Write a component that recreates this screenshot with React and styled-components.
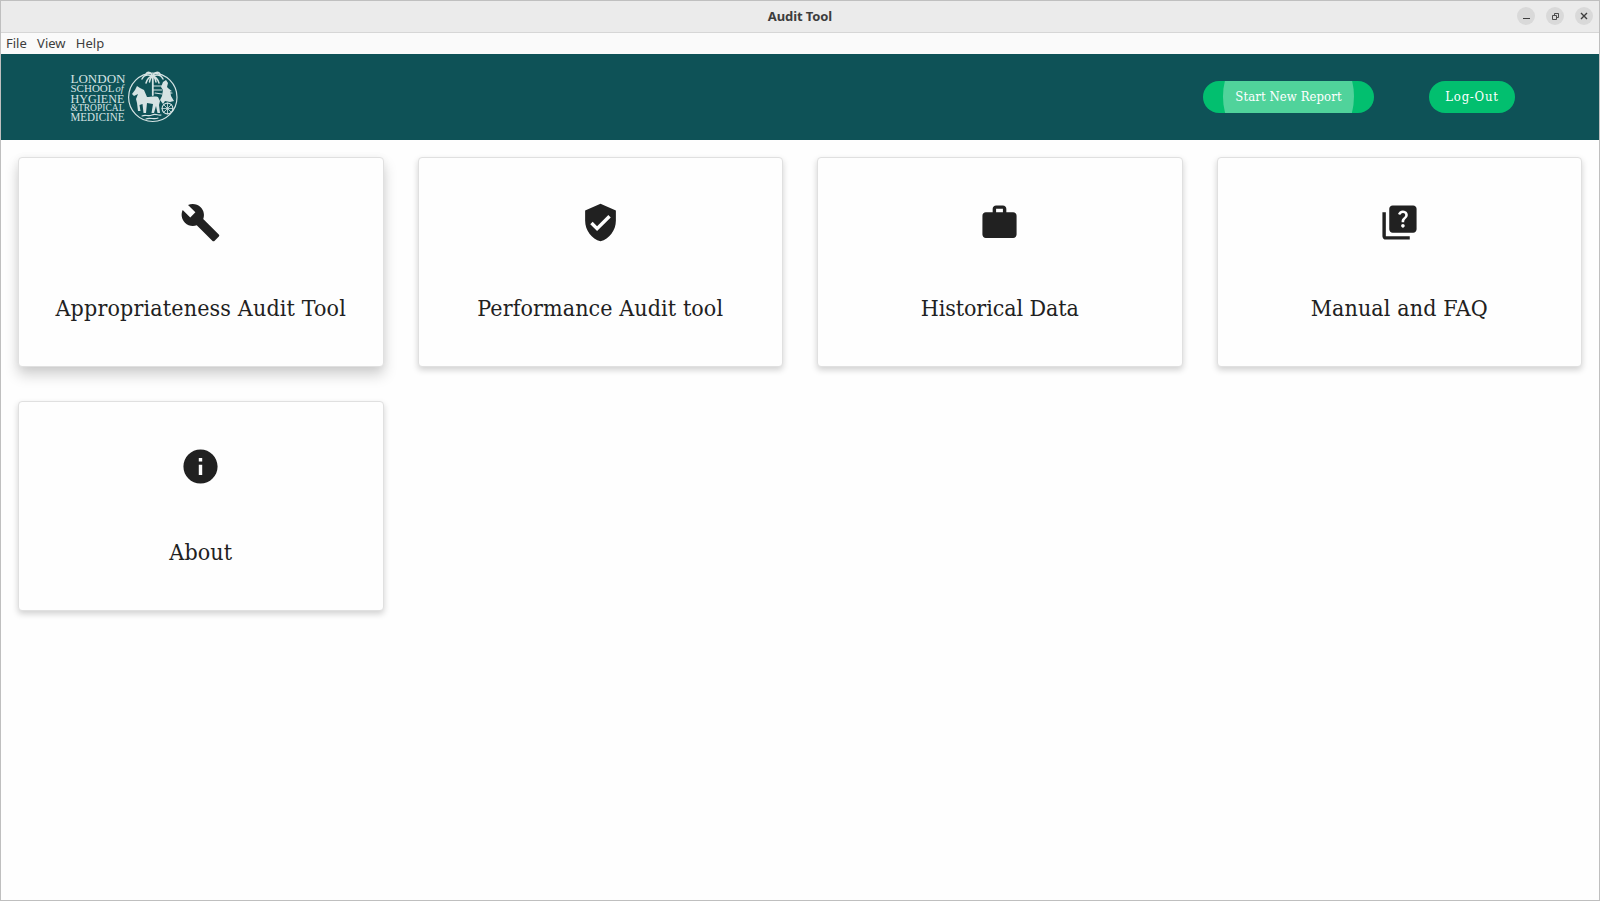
import React from "react";
import styled, { createGlobalStyle } from "styled-components";
import { MdBuild, MdVerifiedUser, MdWork, MdQuiz, MdInfo } from "react-icons/md";

const GlobalStyle = createGlobalStyle`
  * { box-sizing: border-box; }
  body { margin: 0; background: #fefefe; overflow: hidden; }
`;

const serif = `"DejaVu Serif Condensed", "DejaVu Serif", serif`;

const Window = styled.div`
  display: flex;
  flex-direction: column;
  width: 1600px;
  height: 901px;
  border: 1px solid #bfbfbf;
  background: #fefefe;
`;

const TitleBar = styled.div`
  display: grid;
  grid-template-columns: 1fr auto 1fr;
  align-items: center;
  height: 32px;
  padding: 0 6.5px 1px;
  background: #ebebeb;
  border-bottom: 1px solid #d6d6d6;
  font: 700 13px/30px "Noto Sans", sans-serif;
  color: #3d3d3d;
`;

const Title = styled.span`
  grid-column: 2;
  letter-spacing: -0.1px;
  white-space: nowrap;
`;

const WindowControls = styled.div`
  display: flex;
  justify-content: flex-end;
  gap: 11px;
`;

const ControlButton = styled.span`
  display: flex;
  width: 18px;
  height: 18px;
  border-radius: 50%;
  background: #d9d9d9;
`;

const MenuBar = styled.div`
  display: flex;
  gap: 10.3px;
  height: 21px;
  padding-left: 5px;
  background: #fafafa;
  font: 400 13px/20px "Noto Sans", sans-serif;
  color: #3d3d3d;
`;

const MenuItem = styled.span`
  letter-spacing: 0;
`;

const Header = styled.header`
  display: flex;
  align-items: center;
  height: 86px;
  padding: 0 84px 0 68px;
  background: #0e5257;
`;

const Logo = styled.svg`
  display: block;
  margin-right: auto;
`;

const PillButton = styled.button`
  position: relative;
  overflow: hidden;
  width: ${(p) => p.$width}px;
  height: 32px;
  margin-left: ${(p) => p.$gap || 0}px;
  padding: 0;
  border: 0;
  border-radius: 16px;
  background: #02bf6f;
  color: #fff;
  font: 400 13px/32px ${serif};
  letter-spacing: ${(p) => p.$spacing}px;
  white-space: nowrap;
`;

const Ripple = styled.span`
  position: absolute;
  top: -50px;
  left: 20px;
  width: 131px;
  height: 131px;
  border-radius: 50%;
  background: rgba(255, 255, 255, 0.31);
`;

const Label = styled.span`
  position: relative;
`;

const CardGrid = styled.main`
  display: grid;
  grid-template-columns: repeat(4, 1fr);
  grid-auto-rows: 210px;
  gap: 34px;
  padding: 17px;
`;

const Card = styled.section`
  display: flex;
  flex-direction: column;
  align-items: center;
  padding-top: 44px;
  border: 1px solid #e0e0e0;
  border-radius: 4px;
  background: #fefefe;
  box-shadow: ${(p) =>
    p.$raised
      ? "0 8px 14px rgba(0,0,0,.18), 0 1px 8px rgba(0,0,0,.05)"
      : "0 3px 6px rgba(0,0,0,.18)"};
  color: #212121;

  svg { width: 41px; height: 41px; }
`;

const CardTitle = styled.h2`
  margin: 48px 0 0;
  font: 400 23px/34px ${serif};
  letter-spacing: ${(p) => p.$spacing}px;
  white-space: nowrap;
`;

const cards = [
  { title: "Appropriateness Audit Tool", Icon: MdBuild, spacing: 0.16, raised: true },
  { title: "Performance Audit tool", Icon: MdVerifiedUser, spacing: 0.1 },
  { title: "Historical Data", Icon: MdWork, spacing: -0.07 },
  { title: "Manual and FAQ", Icon: MdQuiz, spacing: 0.12 },
  { title: "About", Icon: MdInfo, spacing: 0.1 },
];

const logoLines = [
  ["LONDON", 15.2, 12, 55],
  ["HYGIENE", 34.6, 12, 54],
  ["&TROPICAL", 43.3, 9.5, 54],
  ["MEDICINE", 53, 11.5, 54],
];

function SchoolLogo() {
  return (
    <Logo width="112" height="58" viewBox="0 0 112 58" fill="#d5e3e3">
      <g fontFamily="Liberation Serif, serif">
        {logoLines.map(([text, y, size, width]) => (
          <text key={text} x="1.5" y={y} fontSize={size} textLength={width} lengthAdjust="spacingAndGlyphs">{text}</text>
        ))}
        <text x="1.5" y="24.4" fontSize="10" textLength="44" lengthAdjust="spacingAndGlyphs">SCHOOL</text>
        <text x="46.5" y="24.4" fontSize="10" fontStyle="italic" textLength="8" lengthAdjust="spacingAndGlyphs">of</text>
      </g>
      <circle cx="83.8" cy="29.3" r="24.2" fill="none" stroke="#d5e3e3" strokeWidth="1.2" />
      <g fill="none" stroke="#d5e3e3" strokeLinecap="round">
        <path strokeWidth="1.8" d="M83.8 8v19" />
        <path strokeWidth="1.5" d="M83 7c-2-4-5-3-6-1M84 7c3-4 6-3 7-1M83 8c-5-2-8-1-10 3M84 8c5-2 8-1 10 3M83 8c-4 1-5 4-6 7M84 8c4 1 5 4 6 7M83.5 8c-2 2-3 4-3 6M84 8c2 2 3 4 3 6" />
        <path strokeWidth="1.1" d="M84 18h9M84 22h9M97 20l5 3M95 25h8M86 25l7 1" />
        <circle cx="98.5" cy="40.5" r="5.4" strokeWidth="1.1" />
        <path strokeWidth=".8" d="M98.5 35v11M93 40.5h11M94.7 36.7l7.6 7.6M94.7 44.3l7.6-7.6" />
        <path strokeWidth="1.1" d="M73 48c4-2 6 1 10-1s6 1 9 0M77 51c4-2 8 1 12-1" />
      </g>
      <path d="M66 22l2-4 3 2 4 2 3 7c3 0 8-1 11 0l2 4-1 4 1 8h-2.5l-1.5-7-2 7h-2.5l1.5-9-6-1-1 10h-2.5l-1-9-3 1 1 6h-2.5l-1-8-1-4 2-5-4 2-2-2z" />
      <path d="M94 14l3-2 2 3-1 4 3 3 1 6 3 5-4 1-5-1-2 3-3-4 2-4 1-6-2-3z" />
    </Logo>
  );
}

const ControlIcon = ({ children }) => (
  <ControlButton>
    <svg width="18" height="18" fill="none" stroke="#3d3d3d">{children}</svg>
  </ControlButton>
);

export default function App() {
  return (
    <Window>
      <GlobalStyle />
      <TitleBar>
        <Title>Audit Tool</Title>
        <WindowControls>
          <ControlIcon><path d="M6 11.5h7" /></ControlIcon>
          <ControlIcon><path d="M6.5 8.5h4v4h-4zM8.5 8V6.5h4v4H11" strokeWidth=".9" /></ControlIcon>
          <ControlIcon><path d="M6 6l6 6M12 6l-6 6" strokeWidth="1.4" /></ControlIcon>
        </WindowControls>
      </TitleBar>
      <MenuBar>
        <MenuItem>File</MenuItem>
        <MenuItem>View</MenuItem>
        <MenuItem>Help</MenuItem>
      </MenuBar>
      <Header>
        <SchoolLogo />
        <PillButton $width={171} $spacing={0.08}><Ripple /><Label>Start New Report</Label></PillButton>
        <PillButton $width={86} $gap={55} $spacing={0.75}><Label>Log-Out</Label></PillButton>
      </Header>
      <CardGrid>
        {cards.map(({ title, Icon, spacing, raised }) => (
          <Card key={title} $raised={raised}>
            <Icon />
            <CardTitle $spacing={spacing}>{title}</CardTitle>
          </Card>
        ))}
      </CardGrid>
    </Window>
  );
}
